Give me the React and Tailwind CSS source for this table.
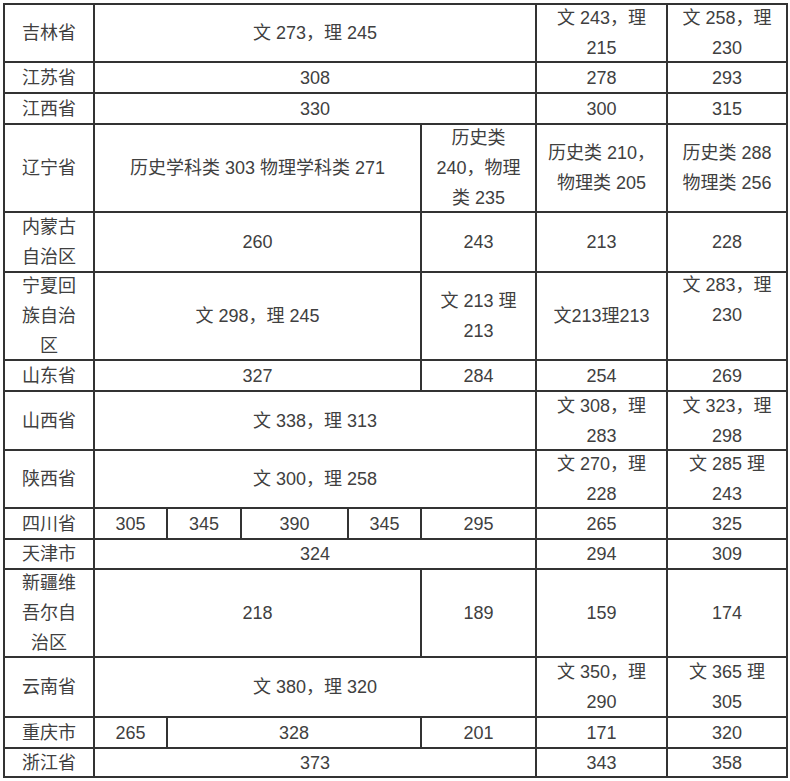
import React from 'react';

// score table — cell = [text, colSpan, extra classes]
const rows = [
  { h: 'h-[58px]', cells: [['吉林省'], ['文 273，理 245', 5], ['文 243，理\n215'], ['文 258，理\n230']] },
  { h: 'h-[31px]', cells: [['江苏省'], ['308', 5], ['278'], ['293']] },
  { h: 'h-[31px]', cells: [['江西省'], ['330', 5], ['300'], ['315']] },
  {
    h: 'h-[88px]',
    cells: [['辽宁省'], ['历史学科类 303 物理学科类 271', 4], ['历史类\n240，物理\n类 235'], ['历史类 210，\n物理类 205'], ['历史类 288\n物理类 256']],
  },
  { h: 'h-[60px]', cells: [['内蒙古\n自治区'], ['260', 4], ['243'], ['213'], ['228']] },
  {
    h: 'h-[88px]',
    cells: [['宁夏回\n族自治\n区'], ['文 298，理 245', 4], ['文 213 理\n213'], ['文213理213'], ['文 283，理\n230', 1, 'align-top']],
  },
  { h: 'h-[31px]', cells: [['山东省'], ['327', 4], ['284'], ['254'], ['269']] },
  { h: 'h-[59px]', cells: [['山西省'], ['文 338，理 313', 5], ['文 308，理\n283'], ['文 323，理\n298']] },
  { h: 'h-[58px]', cells: [['陕西省'], ['文 300，理 258', 5], ['文 270，理\n228'], ['文 285 理\n243']] },
  {
    h: 'h-[31px]',
    cells: [['四川省'], ['305'], ['345'], ['390'], ['345'], ['295'], ['265'], ['325']],
  },
  { h: 'h-[30px]', cells: [['天津市'], ['324', 5], ['294'], ['309']] },
  { h: 'h-[88px]', cells: [['新疆维\n吾尔自\n治区'], ['218', 4], ['189'], ['159'], ['174']] },
  { h: 'h-[60px]', cells: [['云南省'], ['文 380，理 320', 5], ['文 350，理\n290'], ['文 365 理\n305']] },
  { h: 'h-[31px]', cells: [['重庆市'], ['265'], ['328', 3], ['201'], ['171'], ['320']] },
  { h: 'h-[29px]', cells: [['浙江省'], ['373', 5], ['343'], ['358']] },
];

export default function App() {
  return (
    <div className="w-[790px] h-[781px] bg-white pt-[3px] pl-[3px]">
      <table
        className="table-fixed border-collapse w-[785px] text-[18px] text-[#404040]"
        style={{ fontFamily: '"Liberation Sans", "Noto Sans CJK SC", sans-serif' }}
      >
        <colgroup>
          <col className="w-[90px]" />
          <col className="w-[73px]" />
          <col className="w-[74px]" />
          <col className="w-[107px]" />
          <col className="w-[73px]" />
          <col className="w-[115px]" />
          <col className="w-[131px]" />
          <col className="w-[120px]" />
        </colgroup>
        <tbody>
          {rows.map((row, i) => (
            <tr key={i} className={row.h}>
              {row.cells.map(([text, span = 1, extra = 'align-middle'], j) => (
                <td
                  key={j}
                  colSpan={span}
                  className={`border-2 border-[#333] p-0 text-center whitespace-pre ${extra}`}
                >
                  {/* lines are 30px apart in the source, a touch taller than the rows allow */}
                  <div className="leading-[30px] -my-[3px]">{text}</div>
                </td>
              ))}
            </tr>
          ))}
        </tbody>
      </table>
    </div>
  );
}
